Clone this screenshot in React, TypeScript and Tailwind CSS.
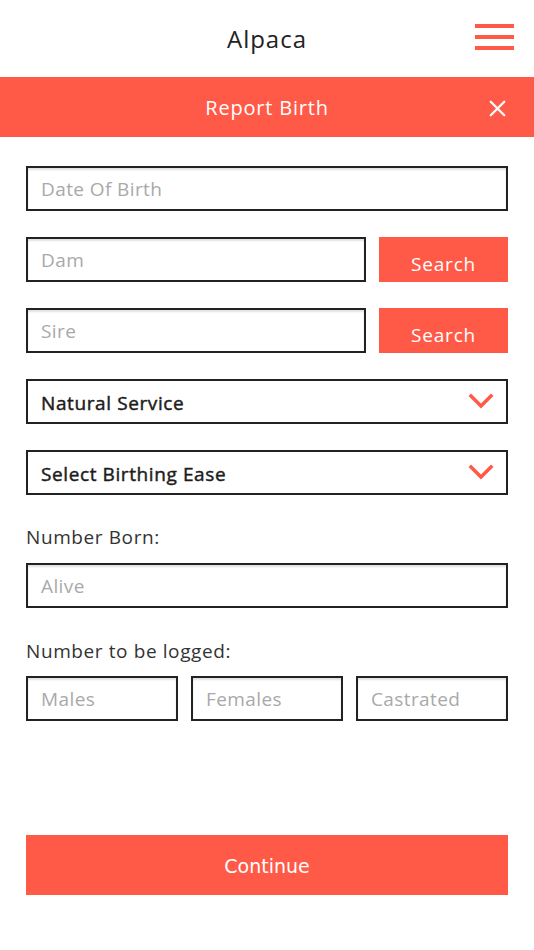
import { X } from 'lucide-react';

const font = { fontFamily: '"Open Sans", "Noto Sans", sans-serif' };

function Field({ placeholder, className = '' }: { placeholder: string; className?: string }) {
    return (
        <div className={`h-[45px] border-2 border-[#222] shadow-[inset_0_2px_2px_rgba(0,0,0,0.12)] flex items-center px-[13px] pt-[2px] text-[19px] tracking-[0.4px] text-[#a9a9a9] ${className}`}>
            {placeholder}
        </div>
    );
}

function Select({ label }: { label: string }) {
    return (
        <div className="h-[45px] border-2 border-[#222] flex items-center justify-between pl-[13px] pr-[12px] text-[19px] tracking-[0.6px] text-[#1c1c1c] [-webkit-text-stroke:0.45px_#1c1c1c]">
            <span className="pt-[4px]">{label}</span>
            <svg width="26" height="16" viewBox="0 0 26 16" className="mb-[2px]">
                <path d="M3 3 L13 13 L23 3" fill="none" stroke="#ff5a47" strokeWidth="3.5" strokeLinecap="square" />
            </svg>
        </div>
    );
}

export default function App() {
    return (
        <div className="w-[534px] h-[950px] bg-white flex flex-col" style={font}>
            <header className="h-[77px] relative flex items-center justify-center">
                <h1 className="text-[24px] text-[#222] tracking-[1px]">Alpaca</h1>
                <div className="absolute right-[20px] top-[24px] w-[39px] flex flex-col gap-[7px]">
                    <span className="h-[4px] bg-[#ff5a47]" />
                    <span className="h-[4px] bg-[#ff5a47]" />
                    <span className="h-[4px] bg-[#ff5a47]" />
                </div>
            </header>

            <div className="h-[60px] bg-[#ff5a47] relative flex items-center justify-center">
                <span className="text-white text-[20px] tracking-[0.8px] pt-[1px]">Report Birth</span>
                <X className="absolute right-[23px] top-[18px] w-[27px] h-[27px] text-white" strokeWidth={2} />
            </div>

            <form className="flex-1 flex flex-col px-[26px] pt-[29px]">
                <Field placeholder="Date Of Birth" />

                <div className="flex gap-[13px] mt-[26px]">
                    <Field placeholder="Dam" className="flex-1" />
                    <button type="button" className="w-[129px] h-[45px] bg-[#ff5a47] text-white text-[19px] pt-[10px] tracking-[0.8px]">Search</button>
                </div>

                <div className="flex gap-[13px] mt-[26px]">
                    <Field placeholder="Sire" className="flex-1" />
                    <button type="button" className="w-[129px] h-[45px] bg-[#ff5a47] text-white text-[19px] pt-[10px] tracking-[0.8px]">Search</button>
                </div>

                <div className="mt-[26px]">
                    <Select label="Natural Service" />
                </div>
                <div className="mt-[26px]">
                    <Select label="Select Birthing Ease" />
                </div>

                <label className="mt-[27px] text-[19px] text-[#333] tracking-[0.6px] leading-[30px]">Number Born:</label>
                <Field placeholder="Alive" className="mt-[11px]" />

                <label className="mt-[28px] text-[19px] text-[#333] tracking-[0.6px] leading-[30px]">Number to be logged:</label>
                <div className="grid grid-cols-3 gap-[13px] mt-[10px]">
                    <Field placeholder="Males" />
                    <Field placeholder="Females" />
                    <Field placeholder="Castrated" />
                </div>

                <button
                    type="button"
                    className="mt-[114px] h-[60px] bg-[#ff5a47] text-white text-[19px] pt-[3px]"
                    style={{ fontFamily: '"DejaVu Sans", sans-serif' }}
                >
                    Continue
                </button>
            </form>
        </div>
    );
}
